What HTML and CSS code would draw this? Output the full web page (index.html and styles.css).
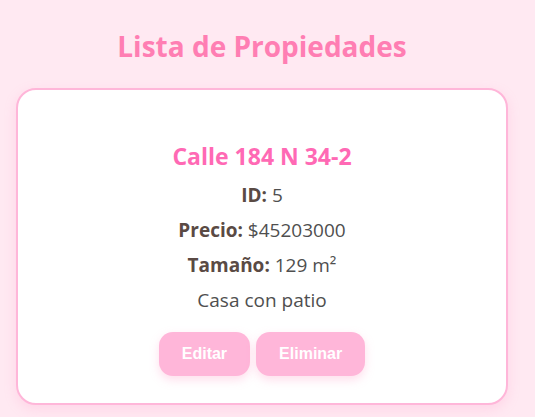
FILE: index.html
```html
<!DOCTYPE html>
<html lang="es">
<head>
<meta charset="utf-8">
<title>Lista de Propiedades</title>
<link rel="stylesheet" href="styles.css">
</head>
<body>
<main class="page">
  <h1 class="title">Lista de Propiedades</h1>
  <section class="card">
    <h2 class="card-title">Calle 184 N 34-2</h2>
    <p class="row"><strong>ID:</strong> 5</p>
    <p class="row"><strong>Precio:</strong> $45203000</p>
    <p class="row"><strong>Tamaño:</strong> 129 m²</p>
    <p class="row">Casa con patio</p>
    <div class="actions">
      <button class="btn btn-edit">Editar</button>
      <button class="btn btn-delete">Eliminar</button>
    </div>
  </section>
</main>
</body>
</html>
```

FILE: styles.css
```css
html, body {
  margin: 0;
  padding: 0;
  background: #ffe9f2;
}
body {
  font-family: "Open Sans", "Noto Sans", sans-serif;
  width: 535px;
  height: 417px;
  overflow: hidden;
}
.page {
  padding: 0 27px 0 16px;
}
.title {
  margin: 0;
  padding-top: 27px;
  height: 88px;
  box-sizing: border-box;
  text-align: center;
  color: #ff7eb3;
  font-size: 28px;
  font-weight: 700;
  line-height: 38px;
}
.card {
  background: #fff;
  border: 2px solid #ffb6d9;
  border-radius: 20px;
  box-shadow: 0 4px 12px rgba(255, 150, 200, 0.25);
  padding: 51px 20px 27px;
  text-align: center;
}
.card-title {
  margin: 0 0 7px;
  color: #ff69b4;
  font-size: 23px;
  font-weight: 700;
  line-height: 30px;
}
.row {
  margin: 0;
  color: #4f4f4f;
  font-size: 19px;
  line-height: 35px;
}
.row strong {
  color: #5a4a44;
}
.actions {
  display: flex;
  justify-content: center;
  gap: 6px;
  margin-top: 14px;
}
.btn {
  border: none;
  height: 44px;
  padding: 0 23px;
  border-radius: 14px;
  background: #ffb6d9;
  color: #fff;
  font-family: "Liberation Sans", Arial, sans-serif;
  font-weight: 700;
  font-size: 16px;
  box-shadow: 0 4px 10px rgba(255, 160, 200, 0.35);
}
```
